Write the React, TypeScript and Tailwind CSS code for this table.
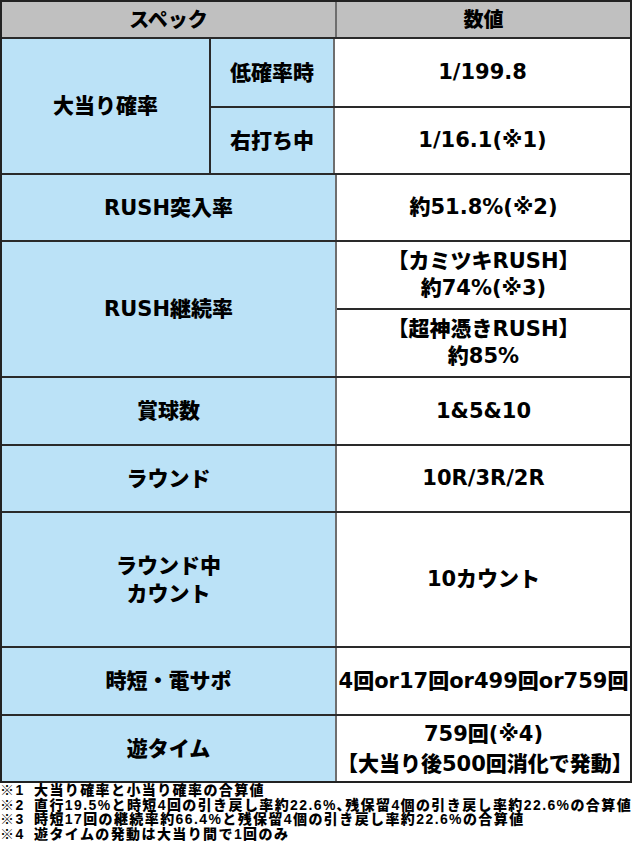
import React from 'react';

const tableFont = { fontFamily: '"DejaVu Sans", "Noto Sans CJK JP", sans-serif' };
const noteFont = { fontFamily: '"Liberation Sans", "Noto Sans CJK JP", sans-serif' };

const label = 'flex items-center justify-center text-center bg-[#bbe2f7] text-[21px] font-black leading-[28px] text-black';
const value = 'flex items-center justify-center text-center bg-white text-[21px] font-black leading-[27px] text-black';

function Row({ h, left, children, last }: { h: string; left: React.ReactNode; children: React.ReactNode; last?: boolean }) {
  return (
    <div className={`flex ${h} ${last ? '' : 'border-b-2 border-[#2a2a2a]'}`}>
      <div className={`${label} w-[335px] shrink-0 border-r-2 border-[#6e6e6e]`}>{left}</div>
      <div className={`${value} flex-1`}>{children}</div>
    </div>
  );
}

const notes = [
  ['※1', '大当り確率と小当り確率の合算値'],
  ['※2', '直行19.5%と時短4回の引き戻し率約22.6%､残保留4個の引き戻し率約22.6%の合算値'],
  ['※3', '時短17回の継続率約66.4%と残保留4個の引き戻し率約22.6%の合算値'],
  ['※4', '遊タイムの発動は大当り間で1回のみ'],
];

export default function App() {
  return (
    <div className="w-[640px] h-[841px] bg-white">
      <div className="w-[632px] border-2 border-[#222]" style={tableFont}>
        {/* header */}
        <div className="flex h-[37px] bg-[#c0c0c0] border-b-2 border-[#2a2a2a] text-[20px] font-black text-black">
          <div className="w-[335px] shrink-0 border-r-2 border-[#6e6e6e] flex items-center justify-center">スペック</div>
          <div className="flex-1 flex items-center justify-center">数値</div>
        </div>

        {/* 大当り確率 */}
        <div className="flex border-b-2 border-[#2a2a2a]">
          <div className={`${label} w-[209px] shrink-0 border-r-2 border-[#2a2a2a]`}>大当り確率</div>
          <div className="flex-1 flex flex-col">
            <div className="flex h-[69px] border-b-2 border-[#2a2a2a]">
              <div className={`${label} w-[124px] shrink-0 border-r-2 border-[#6e6e6e]`}>低確率時</div>
              <div className={`${value} flex-1`}>1/199.8</div>
            </div>
            <div className="flex h-[65px]">
              <div className={`${label} w-[124px] shrink-0 border-r-2 border-[#6e6e6e]`}>右打ち中</div>
              <div className={`${value} flex-1`}>1/16.1(※1)</div>
            </div>
          </div>
        </div>

        <Row h="h-[67px]" left="RUSH突入率">約51.8%(※2)</Row>

        {/* RUSH継続率 */}
        <div className="flex border-b-2 border-[#2a2a2a]">
          <div className={`${label} w-[335px] shrink-0 border-r-2 border-[#6e6e6e]`}>RUSH継続率</div>
          <div className="flex-1 flex flex-col">
            <div className={`${value} h-[68px] border-b-2 border-[#2a2a2a]`}>
              <div>【カミツキRUSH】<br />約74%(※3)</div>
            </div>
            <div className={`${value} h-[66px]`}>
              <div>【超神憑きRUSH】<br />約85%</div>
            </div>
          </div>
        </div>

        <Row h="h-[68px]" left="賞球数">1&amp;5&amp;10</Row>
        <Row h="h-[67px]" left="ラウンド">10R/3R/2R</Row>
        <Row h="h-[135px]" left={<div>ラウンド中<br />カウント</div>}>10カウント</Row>
        <Row h="h-[68px]" left="時短・電サポ">4回or17回or499回or759回</Row>
        <Row h="h-[65px]" left="遊タイム" last>
          <div className="leading-[30px]">759回(※4)<br />【大当り後500回消化で発動】</div>
        </Row>
      </div>

      {/* notes */}
      <div className="text-[14px] leading-[14.5px] font-black tracking-[1.4px] text-black whitespace-nowrap" style={noteFont}>
        {notes.map(([k, t]) => (
          <div key={k} className="flex">
            <span className="w-[34px] shrink-0">{k}</span>
            <span>{t}</span>
          </div>
        ))}
      </div>
    </div>
  );
}
